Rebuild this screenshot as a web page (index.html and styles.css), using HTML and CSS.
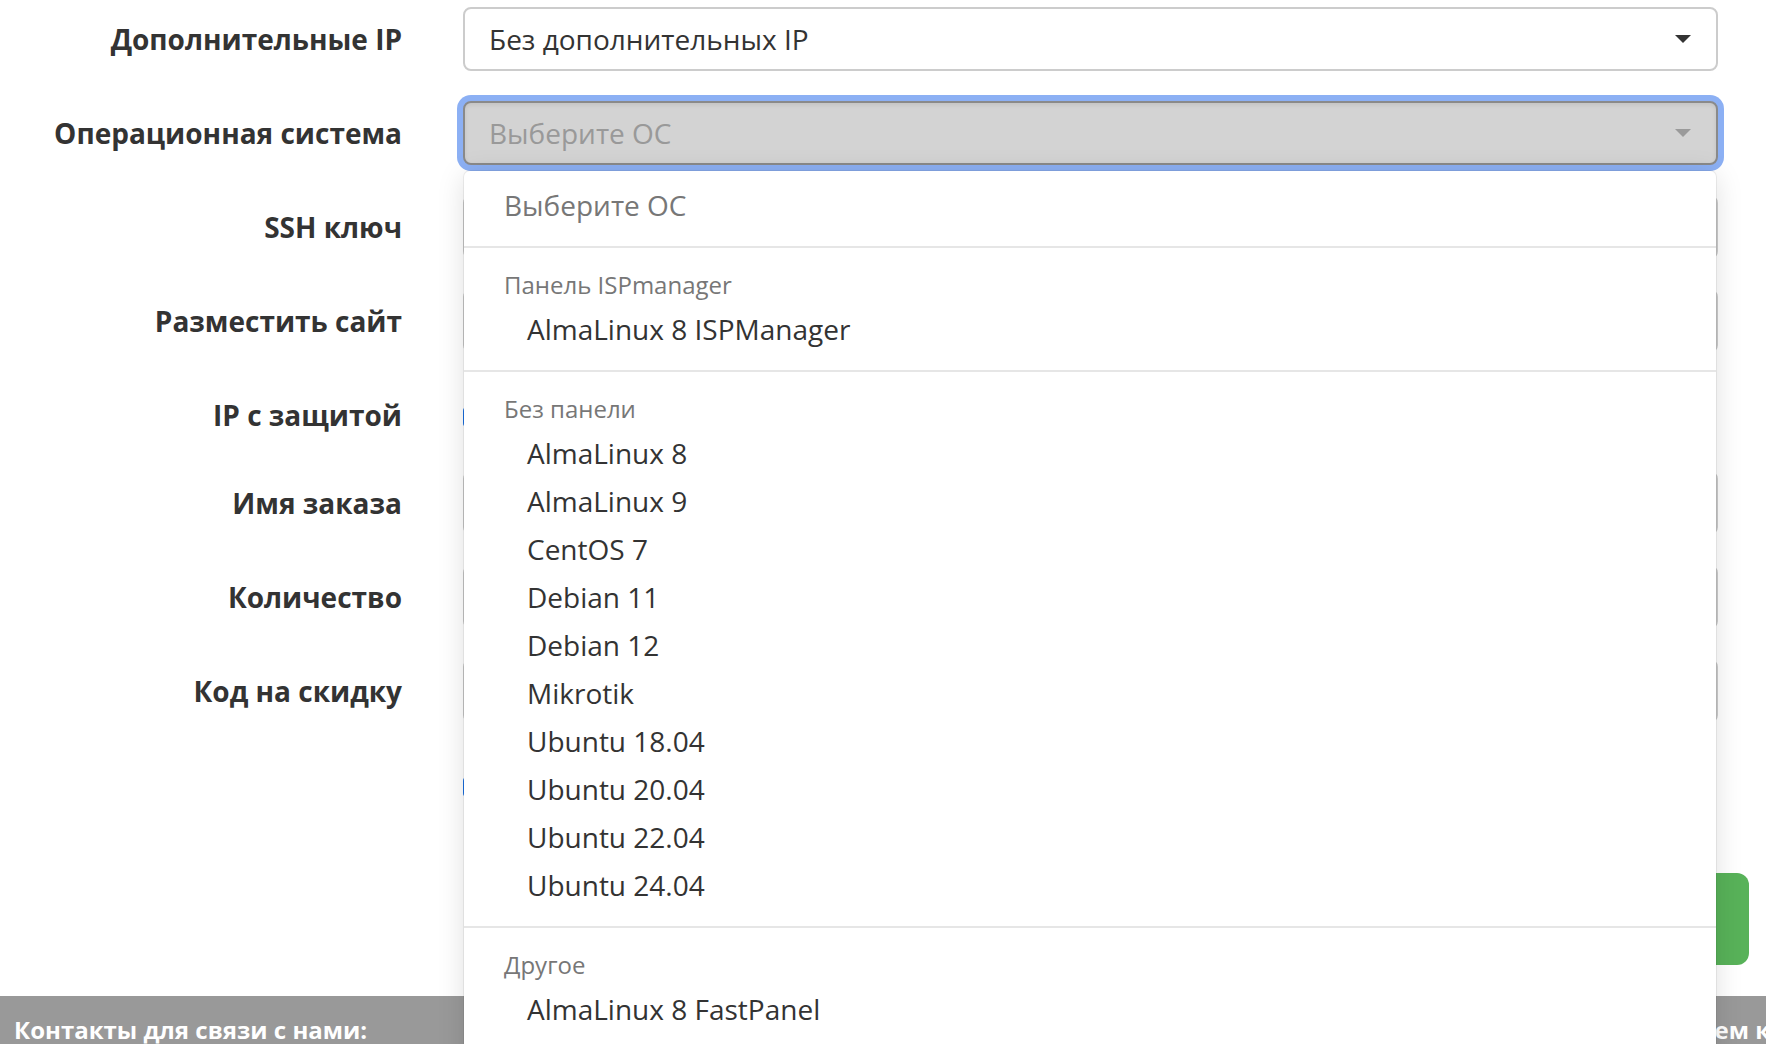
FILE: index.html
```html
<!DOCTYPE html>
<html lang="ru">
<head>
<meta charset="utf-8">
<title>Заказ сервера</title>
<link rel="stylesheet" href="styles.css">
</head>
<body>
<div class="page">
  <form class="order-form">
    <div class="row">
      <label class="label">Дополнительные IP</label>
      <div class="control">
        <div class="select">
          <span class="select-text">Без дополнительных IP</span>
          <svg class="caret" width="16" height="8" viewBox="0 0 16 8"><polygon points="0,0 16,0 8,8" fill="#333"/></svg>
        </div>
      </div>
    </div>

    <div class="row">
      <label class="label">Операционная система</label>
      <div class="control control-open">
        <div class="select select-focus">
          <span class="select-text placeholder">Выберите ОС</span>
          <svg class="caret" width="16" height="8" viewBox="0 0 16 8"><polygon points="0,0 16,0 8,8" fill="#9a9a9a"/></svg>
        </div>
        <div class="dropdown">
          <div class="opt-placeholder">Выберите ОС</div>
          <div class="group">
            <div class="group-label">Панель ISPmanager</div>
            <div class="item">AlmaLinux 8 ISPManager</div>
          </div>
          <div class="group">
            <div class="group-label">Без панели</div>
            <div class="item">AlmaLinux 8</div>
            <div class="item">AlmaLinux 9</div>
            <div class="item">CentOS 7</div>
            <div class="item">Debian 11</div>
            <div class="item">Debian 12</div>
            <div class="item">Mikrotik</div>
            <div class="item">Ubuntu 18.04</div>
            <div class="item">Ubuntu 20.04</div>
            <div class="item">Ubuntu 22.04</div>
            <div class="item">Ubuntu 24.04</div>
          </div>
          <div class="group">
            <div class="group-label">Другое</div>
            <div class="item">AlmaLinux 8 FastPanel</div>
          </div>
        </div>
      </div>
    </div>

    <div class="row">
      <label class="label">SSH ключ</label>
      <div class="control"><div class="select"></div></div>
    </div>

    <div class="row">
      <label class="label">Разместить сайт</label>
      <div class="control"><div class="select"></div></div>
    </div>

    <div class="row row-check">
      <label class="label">IP с защитой</label>
      <div class="control"><span class="checkbox"></span></div>
    </div>

    <div class="row">
      <label class="label">Имя заказа</label>
      <div class="control"><div class="input"></div></div>
    </div>

    <div class="row">
      <label class="label">Количество</label>
      <div class="control"><div class="input"></div></div>
    </div>

    <div class="row">
      <label class="label">Код на скидку</label>
      <div class="control"><div class="input"></div></div>
    </div>

    <div class="row row-check">
      <span class="label"></span>
      <div class="control"><span class="checkbox"></span></div>
    </div>

    <div class="row-submit">
      <button type="button" class="submit"></button>
    </div>
  </form>

  <footer class="footer">
    <div class="footer-col">Контакты для связи с нами:</div>
    <div class="footer-col">Приглашаем к сотрудничеству</div>
  </footer>
</div>
</body>
</html>
```

FILE: styles.css
```css
html, body {
  margin: 0;
  padding: 0;
  overflow: hidden;
  background: #fff;
}

body {
  font-family: "Open Sans", "Noto Sans", sans-serif;
  color: #333;
}

.page {
  width: 1766px;
}

.order-form {
  display: flex;
  flex-direction: column;
  gap: 30px;
  padding-top: 7px;
}

.row {
  display: grid;
  grid-template-columns: 402px 1255px;
  column-gap: 61px;
  height: 64px;
}

.row-check {
  height: 58px;
}

.label {
  align-self: start;
  text-align: right;
  font-weight: 700;
  font-size: 28px;
  line-height: 64px;
  white-space: nowrap;
}

.control {
  position: relative;
}

.select,
.input {
  box-sizing: border-box;
  height: 64px;
  border: 2px solid #cccccc;
  border-radius: 8px;
  background: #fff;
  display: flex;
  align-items: center;
  padding: 0 24px;
  font-size: 28px;
}

.select-text {
  flex: 1;
  white-space: nowrap;
}

.caret {
  flex: none;
  margin-right: 1px;
}

.select-focus {
  background: #d3d3d3;
  border-color: #8a8a8a;
  box-shadow: 0 0 0 6px #8cb0f4, inset 0 2px 4px rgba(0, 0, 0, 0.08);
}

.placeholder {
  color: #999;
}

.checkbox {
  position: absolute;
  left: 0;
  top: 24px;
  width: 20px;
  height: 20px;
  border-radius: 4px;
  background: #1a73e8;
}

.row-submit {
  display: flex;
  justify-content: flex-end;
  padding-right: 17px;
  padding-top: 32px;
}

.submit {
  width: 700px;
  height: 92px;
  border: 0;
  border-radius: 12px;
  background: #58b259;
}

.dropdown {
  position: absolute;
  z-index: 10;
  top: 70px;
  left: 1px;
  right: 2px;
  height: 900px;
  overflow: hidden;
  background: #fff;
  border-radius: 6px 6px 0 0;
  box-shadow: 0 0 0 1px rgba(0, 0, 0, 0.06), 0 4px 28px rgba(0, 0, 0, 0.13);
}

.opt-placeholder {
  padding: 10px 0 17px 40px;
  font-size: 28px;
  line-height: 48px;
  color: #777;
}

.group {
  border-top: 2px solid #e6e6e6;
  padding: 17px 0 17px;
}

.group-label {
  padding-left: 40px;
  font-size: 24px;
  line-height: 40px;
  color: #777;
}

.item {
  padding-left: 63px;
  font-size: 28px;
  line-height: 48px;
  color: #333;
}

.footer {
  display: grid;
  grid-template-columns: 1585px auto;
  margin-top: 31px;
  height: 80px;
  background: #999;
  color: #fff;
  font-weight: 700;
  font-size: 24px;
  white-space: nowrap;
  overflow: hidden;
}

.footer-col {
  padding: 17px 0 0 14px;
  line-height: 34px;
}

.footer-col + .footer-col {
  padding-left: 0;
}
```
